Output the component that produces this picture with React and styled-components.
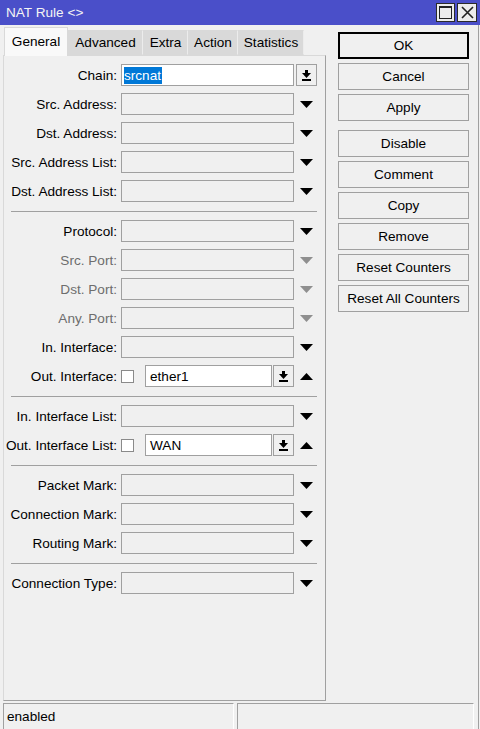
import React from 'react';
import styled, { createGlobalStyle } from 'styled-components';

const Global = createGlobalStyle`
  html, body { margin: 0; padding: 0; background: #f0f0f0; }
  body {
    font-family: "Liberation Sans", Arial, sans-serif;
    font-size: 13.6px;
    color: #000;
  }
  * { box-sizing: border-box; }
`;

const Window = styled.div`
  width: 480px;
  height: 729px;
  display: flex;
  flex-direction: column;
  background: #f0f0f0;
  overflow: hidden;
`;

const TitleBar = styled.div`
  height: 25px;
  flex: none;
  background: #4a4fc9;
  color: #f4f4f4;
  display: flex;
  align-items: center;
  justify-content: space-between;
  padding: 0 3px 0 6px;
`;

const TitleButtons = styled.div`
  display: flex;
  gap: 2px;
`;

const TitleButton = styled.div`
  width: ${p => p.$w}px;
  height: 19px;
  background: #ececec;
  border: 1px solid #2a2a2a;
  display: flex;
  align-items: center;
  justify-content: center;
`;

const Body = styled.div`
  flex: 1;
  width: 479px;
  display: flex;
  flex-direction: column;
  border-right: 1px solid #a0a0a0;
  min-height: 0;
`;

const Main = styled.div`
  flex: 1;
  display: flex;
  min-height: 0;
`;

const LeftCol = styled.div`
  width: 323px;
  margin-left: 3px;
  padding-top: 2px;
  display: flex;
  flex-direction: column;
`;

const TabRow = styled.div`
  height: 28px;
  display: flex;
  align-items: flex-end;
  padding-left: 1px;
`;

const Tab = styled.div`
  width: ${p => p.$w}px;
  height: ${p => (p.$active ? 29 : 25)}px;
  margin-bottom: ${p => (p.$active ? -1 : 0)}px;
  position: relative;
  z-index: ${p => (p.$active ? 1 : 0)};
  display: flex;
  align-items: center;
  justify-content: center;
  padding-bottom: ${p => (p.$active ? 2 : 0)}px;
  background: ${p => (p.$active ? '#f9f9f9' : '#d9d9d9')};
  border: 1px solid #d9d9d9;
  border-right-color: ${p => (p.$active ? '#d9d9d9' : '#ececec')};
  border-bottom: ${p => (p.$active ? 'none' : '1px solid #d9d9d9')};
  white-space: nowrap;
`;

const Panel = styled.div`
  flex: 1;
  background: #f0f0f0;
  border: 1px solid #a0a0a0;
  border-top-color: #d9d9d9;
  border-left-color: #d9d9d9;
  padding: 8px 5px;
  display: flex;
  flex-direction: column;
  gap: 7px;
`;

const Separator = styled.div`
  height: 1px;
  margin: 2px 3px 1px 2px;
  background: #a0a0a0;
`;

const Row = styled.div`
  height: 22px;
  display: flex;
  align-items: center;
`;

const Label = styled.div`
  width: 108px;
  margin-right: 4px;
  display: flex;
  justify-content: flex-end;
  white-space: nowrap;
  color: ${p => (p.$disabled ? '#6d6d6d' : '#000')};
`;

const Field = styled.div`
  width: ${p => p.$w}px;
  height: 22px;
  border: 1px solid #a0a0a0;
  background: ${p => (p.$white ? '#fff' : '#f0f0f0')};
  display: flex;
  align-items: center;
  padding-left: ${p => p.$pad}px;
  white-space: nowrap;
`;

const Selected = styled.span`
  background: #0078d7;
  color: #fff;
  line-height: 17px;
  padding: 0 1px 0 0;
`;

const DropButton = styled.div`
  width: 21px;
  height: 22px;
  margin-left: ${p => p.$ml}px;
  border: 1px solid #a0a0a0;
  background: #f0f0f0;
  display: flex;
  align-items: center;
  justify-content: center;
`;

const ArrowCell = styled.div`
  width: 21px;
  height: 22px;
  margin-left: 2px;
  display: flex;
  align-items: center;
  justify-content: center;
`;

const Check = styled.div`
  width: 13px;
  height: 13px;
  margin-right: 11px;
  border: 1px solid #8a8a8a;
  background: #fff;
`;

const RightCol = styled.div`
  width: 131px;
  margin-left: 12px;
  margin-top: 7px;
  display: flex;
  flex-direction: column;
  gap: 4px;
`;

const Button = styled.div`
  height: 27px;
  flex: none;
  margin-bottom: ${p => (p.$spaced ? 5 : 0)}px;
  display: flex;
  align-items: center;
  justify-content: center;
  background: #f0f0f0;
  border: 1px solid ${p => (p.$primary ? '#000' : '#a0a0a0')};
  box-shadow: ${p => (p.$primary ? 'inset 0 0 0 1px #000' : 'none')};
  white-space: nowrap;
`;

const StatusBar = styled.div`
  height: 26px;
  flex: none;
  margin-top: 2px;
  padding-left: 3px;
  display: flex;
  gap: 3px;
`;

const StatusCell = styled.div`
  width: ${p => p.$w}px;
  height: 26px;
  border-top: 1px solid #a0a0a0;
  border-left: 1px solid #a0a0a0;
  border-right: 1px solid #fff;
  display: flex;
  align-items: center;
  padding-left: 3px;
`;

const Triangle = ({ up, color = '#000' }) => (
  <svg width="13" height="7" viewBox="0 0 13 7">
    <polygon points={up ? '0,7 13,7 6.5,0' : '0,0 13,0 6.5,7'} fill={color} />
  </svg>
);

const DownBar = () => (
  <svg width="9" height="11" viewBox="0 0 9 11">
    <rect x="3" y="0" width="3" height="3" fill="#000" />
    <polygon points="0,3 9,3 4.5,8" fill="#000" />
    <rect x="0" y="9" width="9" height="2" fill="#000" />
  </svg>
);

const tabs = [
  { name: 'General', w: 64 },
  { name: 'Advanced', w: 75 },
  { name: 'Extra', w: 45 },
  { name: 'Action', w: 50 },
  { name: 'Statistics', w: 66 },
];

const sections = [
  [
    { label: 'Chain:', kind: 'chain', value: 'srcnat' },
    { label: 'Src. Address:' },
    { label: 'Dst. Address:' },
    { label: 'Src. Address List:' },
    { label: 'Dst. Address List:' },
  ],
  [
    { label: 'Protocol:' },
    { label: 'Src. Port:', disabled: true },
    { label: 'Dst. Port:', disabled: true },
    { label: 'Any. Port:', disabled: true },
    { label: 'In. Interface:' },
    { label: 'Out. Interface:', kind: 'iface', value: 'ether1' },
  ],
  [
    { label: 'In. Interface List:' },
    { label: 'Out. Interface List:', kind: 'iface', value: 'WAN' },
  ],
  [
    { label: 'Packet Mark:' },
    { label: 'Connection Mark:' },
    { label: 'Routing Mark:' },
  ],
  [{ label: 'Connection Type:' }],
];

const buttons = [
  { text: 'OK', primary: true },
  { text: 'Cancel' },
  { text: 'Apply', spaced: true },
  { text: 'Disable' },
  { text: 'Comment' },
  { text: 'Copy' },
  { text: 'Remove' },
  { text: 'Reset Counters' },
  { text: 'Reset All Counters' },
];

function FieldRow({ label, kind, value, disabled }) {
  if (kind === 'chain') {
    return (
      <Row>
        <Label>{label}</Label>
        <Field $w={173} $white $pad={2}>
          <Selected>{value}</Selected>
        </Field>
        <DropButton $ml={2}><DownBar /></DropButton>
      </Row>
    );
  }
  if (kind === 'iface') {
    return (
      <Row>
        <Label>{label}</Label>
        <Check />
        <Field $w={127} $white $pad={4}>{value}</Field>
        <DropButton $ml={1}><DownBar /></DropButton>
        <ArrowCell><Triangle up /></ArrowCell>
      </Row>
    );
  }
  return (
    <Row>
      <Label $disabled={disabled}>{label}</Label>
      <Field $w={173} $pad={3} />
      <ArrowCell>
        <Triangle color={disabled ? '#8f8f8f' : '#000'} />
      </ArrowCell>
    </Row>
  );
}

export default function App() {
  return (
    <Window>
      <Global />
      <TitleBar>
        <span>NAT Rule &lt;&gt;</span>
        <TitleButtons>
          <TitleButton $w={19}>
            <svg width="13" height="13" viewBox="0 0 13 13">
              <rect x="0.5" y="0.5" width="12" height="12" fill="none" stroke="#222" />
              <rect x="0" y="0" width="13" height="2" fill="#222" />
            </svg>
          </TitleButton>
          <TitleButton $w={20}>
            <svg width="13" height="13" viewBox="0 0 13 13">
              <path d="M1 1 L12 12 M12 1 L1 12" stroke="#222" strokeWidth="1.6" />
            </svg>
          </TitleButton>
        </TitleButtons>
      </TitleBar>
      <Body>
        <Main>
          <LeftCol>
            <TabRow>
              {tabs.map((t, i) => (
                <Tab key={t.name} $w={t.w} $active={i === 0}>{t.name}</Tab>
              ))}
            </TabRow>
            <Panel>
              {sections.map((sec, i) => (
                <React.Fragment key={i}>
                  {i > 0 && <Separator />}
                  {sec.map(f => <FieldRow key={f.label} {...f} />)}
                </React.Fragment>
              ))}
            </Panel>
          </LeftCol>
          <RightCol>
            {buttons.map(b => (
              <Button key={b.text} $primary={b.primary} $spaced={b.spaced}>{b.text}</Button>
            ))}
          </RightCol>
        </Main>
        <StatusBar>
          <StatusCell $w={231}>enabled</StatusCell>
          <StatusCell $w={237} />
        </StatusBar>
      </Body>
    </Window>
  );
}
